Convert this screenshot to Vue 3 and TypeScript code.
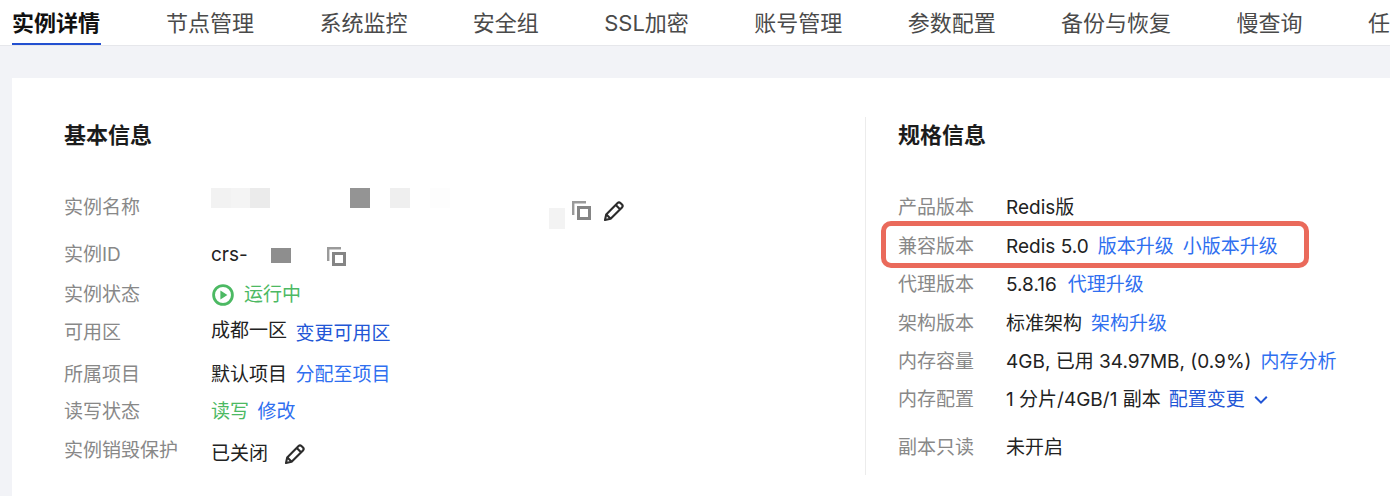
<script setup lang="ts">
interface Row {
  label: string
  gap: number
  value?: string
  green?: boolean
  links?: { text: string; dark?: boolean }[]
  kind?: string
}

const tabs = ['实例详情', '节点管理', '系统监控', '安全组', 'SSL加密', '账号管理', '参数配置', '备份与恢复', '慢查询', '任务管理']

const leftRows: Row[] = [
  { label: '实例名称', gap: 2, kind: 'name' },
  { label: '实例ID', gap: 9, kind: 'id' },
  { label: '实例状态', gap: 2, kind: 'status' },
  { label: '可用区', gap: 0, value: '成都一区', kind: 'zone', links: [{ text: '变更可用区', dark: true }] },
  { label: '所属项目', gap: 4, value: '默认项目', links: [{ text: '分配至项目' }] },
  { label: '读写状态', gap: -1, value: '读写', green: true, links: [{ text: '修改' }] },
  { label: '实例销毁保护', gap: 1, value: '已关闭', kind: 'protect' }
]

const rightRows: Row[] = [
  { label: '产品版本', gap: 1, value: 'Redis版' },
  { label: '兼容版本', gap: 1, value: 'Redis 5.0', kind: 'mark', links: [{ text: '版本升级' }, { text: '小版本升级' }] },
  { label: '代理版本', gap: 0, value: '5.8.16', kind: 'proxy', links: [{ text: '代理升级' }] },
  { label: '架构版本', gap: 1, value: '标准架构', links: [{ text: '架构升级' }] },
  { label: '内存容量', gap: 0, value: '4GB, 已用 34.97MB, (0.9%)', links: [{ text: '内存分析' }] },
  { label: '内存配置', gap: 0, value: '1 分片/4GB/1 副本', kind: 'chevron', links: [{ text: '配置变更', dark: true }] },
  { label: '副本只读', gap: 10, value: '未开启' }
]
</script>

<template>
  <div class="page">
    <nav class="tabs">
      <span v-for="(tab, i) in tabs" :key="tab" class="tab" :class="{ active: i === 0 }">{{ tab }}</span>
    </nav>
    <main class="card">
      <section class="col left">
        <h2>基本信息</h2>
        <div v-for="row in leftRows" :key="row.label" class="row" :style="{ marginTop: row.gap + 'px' }">
          <span class="label">{{ row.label }}</span>
          <div v-if="row.kind === 'name'" class="name">
            <div class="line">
              <i class="patch p1"></i><i class="patch p2"></i><i class="patch p3"></i>
              <i class="patch p4"></i><i class="patch p5"></i><i class="patch p6"></i>
            </div>
            <div class="line second">
              <i class="patch p7"></i>
              <svg class="copy" width="19" height="19" viewBox="0 0 19 19"><path d="M1.2 14V1.2H14" fill="none" stroke="#9a9a9a" stroke-width="2.4"/><rect x="6.5" y="6.5" width="11" height="11" fill="none" stroke="#858585" stroke-width="3"/></svg>
              <svg class="pencil" width="22" height="22" viewBox="0 0 22 22"><path d="M2 20l1.2-5.6L14.6 3a2 2 0 0 1 2.8 0l1.6 1.6a2 2 0 0 1 0 2.8L7.6 18.8zM12.8 5l4.2 4.2M3.4 14.6l4 4" fill="none" stroke="#2c2c2c" stroke-width="2.1" stroke-linejoin="round"/></svg>
            </div>
          </div>
          <div v-else-if="row.kind === 'id'" class="value">
            <span>crs-</span>
            <i class="patch p8"></i>
            <svg class="copy idcopy" width="19" height="19" viewBox="0 0 19 19"><path d="M1.2 14V1.2H14" fill="none" stroke="#9a9a9a" stroke-width="2.4"/><rect x="6.5" y="6.5" width="11" height="11" fill="none" stroke="#858585" stroke-width="3"/></svg>
          </div>
          <div v-else-if="row.kind === 'status'" class="value green">
            <svg class="play" width="22" height="22" viewBox="0 0 22 22"><circle cx="11" cy="11" r="9.4" fill="none" stroke="#4cb963" stroke-width="2.8"/><path d="M8.4 6.4l7 4.6-7 4.6z" fill="#4cb963"/></svg>
            <span>运行中</span>
          </div>
          <div v-else class="value" :class="'k-' + row.kind">
            <span class="main" :class="{ green: row.green }">{{ row.value }}</span>
            <a v-for="link in row.links" :key="link.text" class="link" :class="{ dark: link.dark }">{{ link.text }}</a>
            <svg v-if="row.kind === 'protect'" class="pencil pp" width="22" height="22" viewBox="0 0 22 22"><path d="M2 20l1.2-5.6L14.6 3a2 2 0 0 1 2.8 0l1.6 1.6a2 2 0 0 1 0 2.8L7.6 18.8zM12.8 5l4.2 4.2M3.4 14.6l4 4" fill="none" stroke="#2c2c2c" stroke-width="2.1" stroke-linejoin="round"/></svg>
          </div>
        </div>
      </section>
      <section class="col right">
        <h2>规格信息</h2>
        <div v-for="row in rightRows" :key="row.label" class="row" :style="{ marginTop: row.gap + 'px' }">
          <span class="label narrow">{{ row.label }}</span>
          <div class="value" :class="'k-' + row.kind">
            <span class="main">{{ row.value }}</span>
            <a v-for="link in row.links" :key="link.text" class="link" :class="{ dark: link.dark }">{{ link.text }}</a>
            <svg v-if="row.kind === 'chevron'" class="arrow" width="14" height="10" viewBox="0 0 14 10"><path d="M1.2 1.8l5.8 5.8 5.8-5.8" fill="none" stroke="#2256d6" stroke-width="2"/></svg>
          </div>
          <div v-if="row.kind === 'mark'" class="mark"></div>
        </div>
      </section>
    </main>
  </div>
</template>

<style scoped>
.page {
  width: 1390px;
  height: 496px;
  overflow: hidden;
  background: #f2f3f7;
  font-family: "Inter", "Noto Sans CJK SC", sans-serif;
  font-size: 19px;
  color: #222;
}
.tabs {
  display: flex;
  gap: 65.4px;
  height: 46px;
  box-sizing: border-box;
  padding-left: 12px;
  background: #fff;
  border-bottom: 1px solid #e6e7eb;
  white-space: nowrap;
  overflow: hidden;
}
.tab {
  height: 46px;
  box-sizing: border-box;
  line-height: 46px;
  font-size: 22px;
  color: #4a4a4a;
  flex: none;
}
.tab.active {
  width: 88.6px;
  color: #111;
  font-weight: 700;
  border-bottom: 3px solid #2350d0;
}
.card {
  display: flex;
  margin: 32px 0 0 12px;
  padding-top: 39px;
  height: 420px;
  box-sizing: border-box;
  background: #fff;
}
.col {
  height: 358px;
  box-sizing: border-box;
}
.left {
  width: 853px;
  flex: none;
  padding-left: 52px;
}
.right {
  flex: 1;
  padding-left: 32px;
  border-left: 1px solid #ececec;
}
h2 {
  margin: 0 0 35px;
  height: 37px;
  line-height: 37px;
  font-size: 22px;
  font-weight: 700;
  color: #1c1c1c;
}
.row {
  position: relative;
  display: flex;
  align-items: center;
  height: 38px;
  line-height: 26px;
}
.label {
  width: 147px;
  flex: none;
  color: #888;
}
.label.narrow {
  width: 108px;
}
.value {
  display: flex;
  align-items: center;
  white-space: nowrap;
}
.green {
  color: #4cb963;
}
.link {
  margin-left: 9px;
  color: #2f6ff0;
}
.left .link {
  margin-left: 8.5px;
}
.link.dark {
  color: #2256d6;
}
.k-zone .main {
  margin-top: -4px;
}
.k-zone .link {
  margin-top: 2px;
}
.k-protect {
  margin-top: 5px;
}
.k-proxy .main {
  margin-right: 2px;
}
.k-chevron .link {
  margin-left: 8px;
}
.name {
  align-self: flex-start;
  margin-top: -1px;
}
.line {
  display: flex;
  height: 20px;
}
.second {
  height: 21px;
  padding-left: 338px;
}
.patch {
  display: block;
  flex: none;
  width: 20px;
  height: 20px;
}
.p1 { background: #f2f2f2; }
.p2 { background: #f4f4f4; width: 19px; }
.p3 { background: #ebebeb; }
.p4 { background: #949494; margin-left: 80px; }
.p5 { background: #efefef; margin-left: 20px; }
.p6 { background: #fdfdfd; margin-left: 20px; }
.p7 { background: #f3f3f3; width: 16px; height: 21px; }
.p8 { background: #8e8e8e; height: 15px; margin-left: 23px; }
.copy {
  flex: none;
  margin: -7px 0 0 7px;
}
.idcopy {
  margin: 2px 0 0 36px;
}
.pencil {
  flex: none;
  margin: -8px 0 0 12px;
}
.pp {
  margin: 0 0 0 16px;
}
.play {
  margin: 0 10px 0 1px;
}
.arrow {
  margin-left: 9px;
}
.mark {
  position: absolute;
  left: -17px;
  top: -7px;
  width: 428px;
  height: 47px;
  box-sizing: border-box;
  border: 5px solid #ea6a5b;
  border-radius: 10px;
  pointer-events: none;
}
</style>
